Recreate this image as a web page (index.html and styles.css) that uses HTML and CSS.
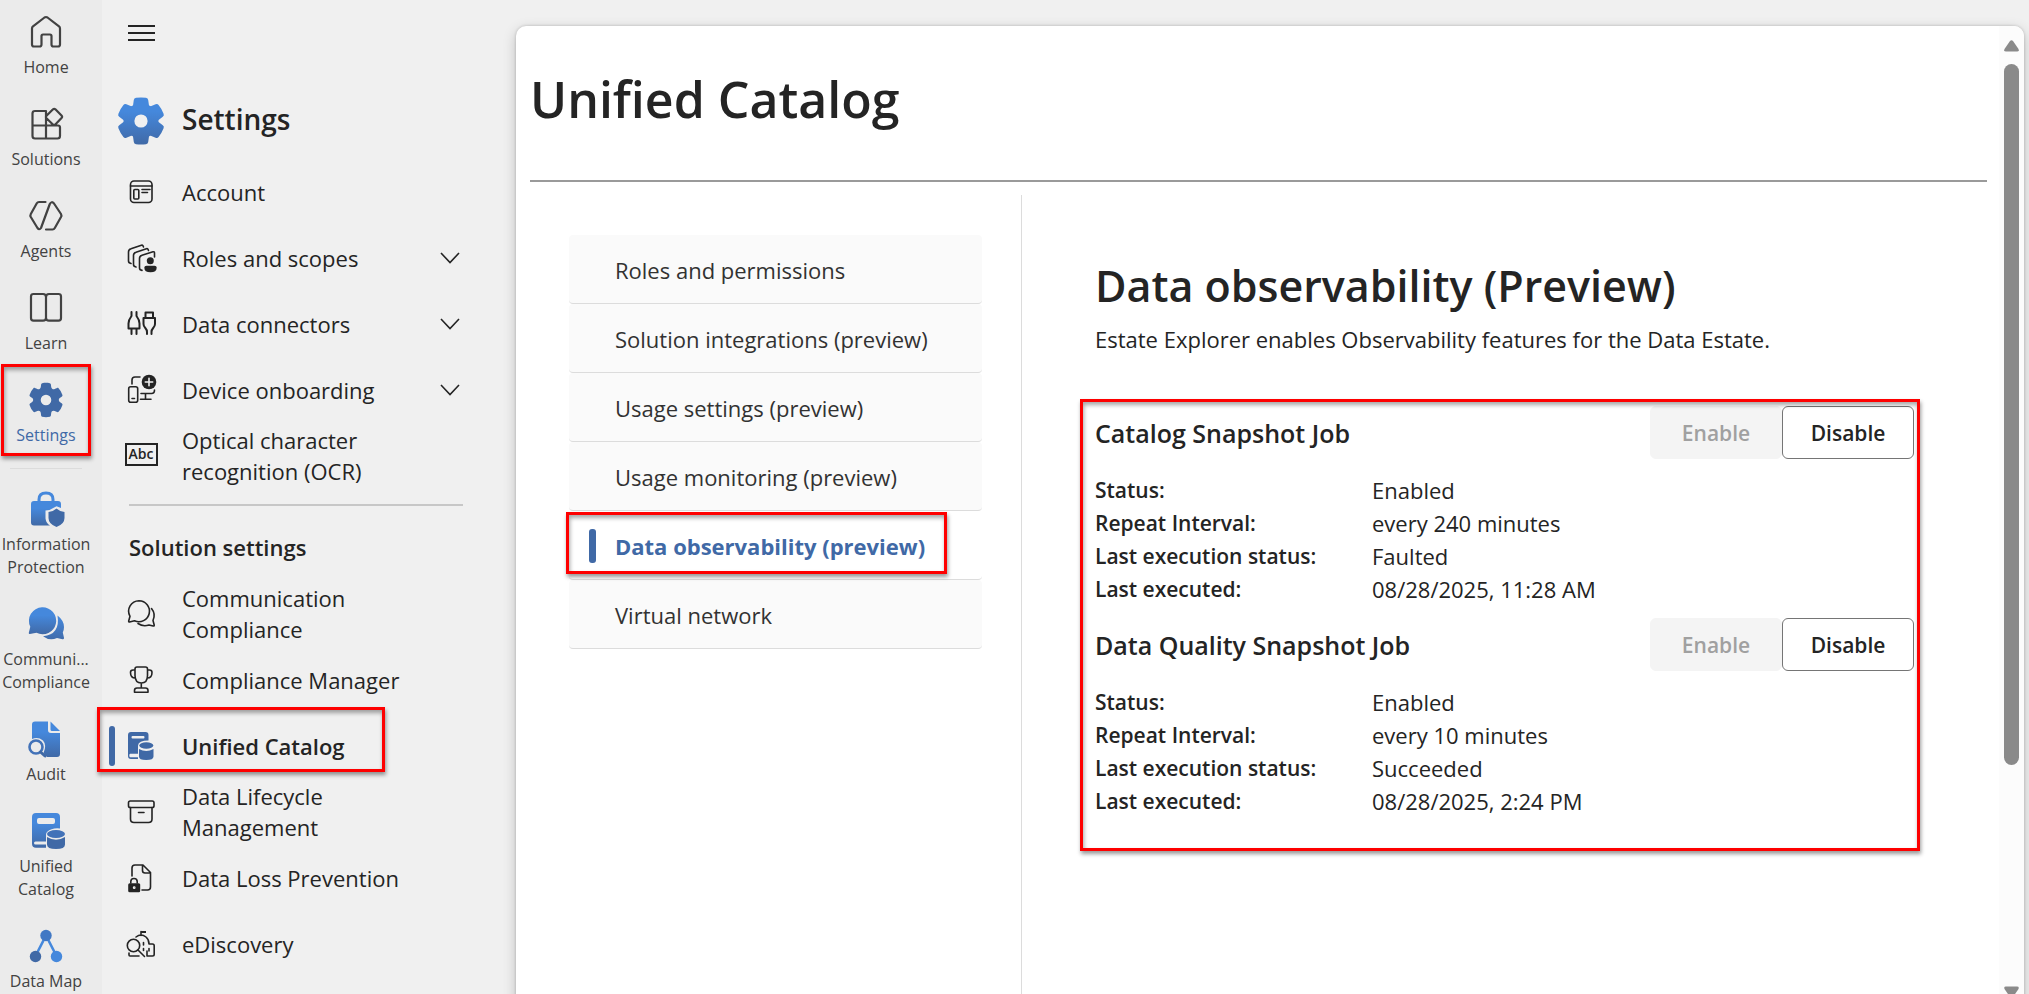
FILE: index.html
```html
<!DOCTYPE html>
<html lang="en">
<head>
<meta charset="utf-8">
<title>Settings - Unified Catalog</title>
<link rel="stylesheet" href="styles.css">
</head>
<body>
<svg class="defs" width="0" height="0" aria-hidden="true">
  <defs>
    <linearGradient id="blue" x1="0" y1="0" x2="0" y2="1">
      <stop offset="0.3" stop-color="#4588dc"/>
      <stop offset="1" stop-color="#4069a6"/>
    </linearGradient>
    <linearGradient id="blue-page" gradientUnits="userSpaceOnUse" x1="0" y1="0" x2="0" y2="36">
      <stop offset="0.3" stop-color="#4588dc"/>
      <stop offset="1" stop-color="#4069a6"/>
    </linearGradient>
    <mask id="gear" maskUnits="userSpaceOnUse" x="0" y="0" width="48" height="48">
      <circle cx="24" cy="24" r="17.500" fill="#fff"/>
      <g fill="#fff">
        <path id="tooth" d="M15.500 12 16.800 3Q17 1 19 .8 24 0 29 .8 31 1 31.200 3L32.500 12Z"/>
        <use href="#tooth" transform="rotate(60 24 24)"/>
        <use href="#tooth" transform="rotate(120 24 24)"/>
        <use href="#tooth" transform="rotate(180 24 24)"/>
        <use href="#tooth" transform="rotate(240 24 24)"/>
        <use href="#tooth" transform="rotate(300 24 24)"/>
      </g>
      <circle cx="24" cy="24" r="6.600" fill="#000"/>
    </mask>
  </defs>
</svg>

<div class="app">
  <nav class="rail" aria-label="Solutions">
    <ul class="rail-list">
      <li><a class="rail-item" href="#">
        <svg class="icon line-lg" viewBox="0 0 36 36"><path d="M6 32.500q-2 0-2-2V14.500q0-1.300 1-2.200L16.500 3.500q1.500-1 3 0L31 12.300q1 .9 1 2.200v16q0 2-2 2h-4.500q-2 0-2-2V22q0-1.500-1.500-1.500h-7q-1.500 0-1.500 1.500v8.500q0 2-2 2Z"/></svg>
        <span>Home</span></a></li>
      <li><a class="rail-item" href="#">
        <svg class="icon line-lg" viewBox="0 0 36 36"><path d="M18 5H7Q4.500 5 4.500 7.500V30q0 2.500 2.500 2.500h22.500q2.500 0 2.500-2.500v-8.500q0-2-2-2H4.500M18 5v27.500M18.500 12.300q-1.200-1.300 0-2.600L25 3.300q1.200-1 2.400 0L33.500 9.500q1.200 1.300 0 2.600L27.300 18.500q-1.200 1-2.400 0Z"/></svg>
        <span>Solutions</span></a></li>
      <li><a class="rail-item" href="#">
        <svg class="icon line-lg" viewBox="0 0 36 36"><path d="M17.500 4H11q-1.500 0-2.200 1.200L2.800 16q-.8 1.500 0 3l6.700 11q1.800 2.500 3.500 0L21.800 6q1.800-3.300 4.200-.5L33 16q.8 1.500 0 3l-6.200 11q-.8 1.500-2.300 1.500h-6.500"/></svg>
        <span>Agents</span></a></li>
      <li><a class="rail-item" href="#">
        <svg class="icon line-lg" viewBox="0 0 36 36"><path d="M18 7q0-3-3-3H5.500Q3 4 3 6.500V28q0 2.700 2.500 2.700H15q3 0 3-3 0 3 3 3h9.500q2.500 0 2.500-2.700V6.500Q33 4 30.500 4H21q-3 0-3 3v20.700"/></svg>
        <span>Learn</span></a></li>
      <li class="marked"><a class="rail-item current" href="#" aria-current="page">
        <svg class="icon" viewBox="1.800 1.800 20.400 20.400"><path fill="#4069a6" fill-rule="evenodd" d="M12.010 2.250c.74 0 1.470.1 2.180.25.32.07.55.33.59.65l.17 1.530a1.380 1.380 0 0 0 1.920 1.110l1.400-.61c.3-.13.64-.06.85.17a9.800 9.800 0 0 1 2.200 3.800c.1.3 0 .63-.26.82l-1.250.92a1.380 1.380 0 0 0 0 2.220l1.250.92c.26.19.36.52.27.82a9.800 9.800 0 0 1-2.200 3.800.75.75 0 0 1-.85.17l-1.400-.62a1.380 1.380 0 0 0-1.930 1.120l-.17 1.520a.75.75 0 0 1-.58.65 9.500 9.500 0 0 1-4.400 0 .75.75 0 0 1-.57-.65l-.17-1.520a1.380 1.380 0 0 0-1.930-1.110l-1.400.62a.75.75 0 0 1-.85-.18 9.800 9.800 0 0 1-2.200-3.800c-.1-.3 0-.63.26-.82l1.250-.92a1.380 1.380 0 0 0 0-2.220l-1.240-.92a.75.75 0 0 1-.28-.82 9.800 9.800 0 0 1 2.200-3.800c.23-.23.57-.3.86-.17l1.400.62c.4.17.86.15 1.250-.08.38-.22.63-.6.68-1.040l.17-1.530a.75.75 0 0 1 .58-.65c.72-.16 1.450-.24 2.200-.25ZM12 9a3 3 0 1 0 0 6 3 3 0 0 0 0-6Z"/></svg>
        <span>Settings</span></a></li>
    </ul>
    <hr class="rail-rule">
    <ul class="rail-list">
      <li><a class="rail-item" href="#">
        <svg class="icon" viewBox="0 0 36 36"><path d="M11 12V8.500q0-6.500 7-6.500t7 6.500V12" fill="none" stroke="#4588dc" stroke-width="3"/><path fill="url(#blue)" d="M6 10h24q3 0 3 3v4l-4.500-1.800-7 3.800-4 .5v8q.5 4.500 4.500 7H6q-3 0-3-3V13q0-3 3-3Z"/><path fill="#4069a6" d="M28.500 17.500q3.500 3.300 8 3.500v6q0 6-8 9-8-3-8-9v-6q4.500-.2 8-3.500Z"/></svg>
        <span>Information Protection</span></a></li>
      <li><a class="rail-item" href="#">
        <svg class="icon" viewBox="0 0 36 36"><path fill="url(#blue)" d="M14 1.300a13.500 13.500 0 1 1-5.500 25.500L1.800 28q-1.300 0-1-1.300l1.500-6A13.500 13.500 0 0 1 14 1.300Z"/><path fill="url(#blue-page)" d="M29.500 9.500q6.500 5 6.500 11.500 0 3-1.200 5.500l1.200 5.300q.2 1.700-1.500 1.500l-5.500-1.200q-7.500 3.200-14-1.800Q32.500 28.500 29.500 9.500Z"/></svg>
        <span>Communi... Compliance</span></a></li>
      <li><a class="rail-item" href="#">
        <svg class="icon" viewBox="0 0 36 36"><path fill="url(#blue)" d="M7 .5h13V9q0 3 3 3h9v21q0 3-3 3H19l-3.500-4Q19 24 15 19.500 10 15.500 4 18V3.500q0-3 3-3ZM22.500.500 32 10h-8q-1.500 0-1.500-1.500Z"/><circle cx="8" cy="26" r="6.500" fill="none" stroke="#4272b8" stroke-width="2.600"/><path d="m12.500 31 4.500 4" stroke="#4069a6" stroke-width="3" stroke-linecap="round"/></svg>
        <span>Audit</span></a></li>
      <li><a class="rail-item" href="#">
        <svg class="icon" viewBox="0 0 36 36"><path fill="url(#blue)" fill-rule="evenodd" d="M8 0h20q4 0 4 4v11.500q-8-1-13 3.500-1 1-1 3v6.500H7.500Q6 28.500 6 30t1.500 1.500H18v3.200H8q-4 0-4-4V4q0-4 4-4Zm3 5q-2 0-2 2v2q0 2 2 2h14q2 0 2-2V7q0-2-2-2Z"/><ellipse cx="28" cy="21" rx="9" ry="4" fill="#4272b8"/><path fill="#4069a6" d="M19 24q9 5.500 18 0v7.500q0 4.500-9 4.500t-9-4.500Z"/></svg>
        <span>Unified Catalog</span></a></li>
      <li><a class="rail-item" href="#">
        <svg class="icon" viewBox="0 0 36 36"><path d="M7.500 28 18 7.500 28.500 28" fill="none" stroke="#4588dc" stroke-width="2.600"/><circle cx="18" cy="7.500" r="5.700" fill="#4178c4"/><circle cx="7.500" cy="28.500" r="5.700" fill="#4069a6"/><circle cx="28.500" cy="28.500" r="5.700" fill="#4588dc"/></svg>
        <span>Data Map</span></a></li>
    </ul>
  </nav>

  <aside class="side">
    <button class="menu-button" type="button" aria-label="Collapse navigation"><i></i><i></i><i></i></button>
    <h2 class="side-title">
      <svg class="gear" viewBox="0 0 48 48"><rect width="48" height="48" fill="url(#blue)" mask="url(#gear)"/></svg>
      <span>Settings</span>
    </h2>
    <ul class="side-list">
      <li><a class="side-item" href="#">
        <svg class="icon line" viewBox="0 0 36 36"><rect x="7.500" y="7" width="21.500" height="21.500" rx="3.500"/><path d="M7.500 12h21.500M19 15.500h8M19 18.500h5.500"/><rect x="10.800" y="15.500" width="5" height="9.500" rx="1"/></svg>
        <span>Account</span></a></li>
      <li><button class="side-item" type="button" aria-expanded="false">
        <svg class="icon line" viewBox="0 0 36 36"><path d="m20.500 7-.6-1.300q-.5-.8-1.500-.5L8 8.800q-2.500.8-2.500 3.200v9q0 2 2.500 2.500M25.500 10.500l-.6-1.300q-.5-.8-1.500-.5L13 12.300q-2.500.8-2.500 3.200v9q0 2 2.500 2.500M31.500 17v-4q0-1.500-1.500-1.300l-11 3.500q-2.500.8-2.500 3.200v9.500q0 2 2.500 2.500"/><circle class="solid" cx="27.300" cy="20.700" r="3.500"/><path class="solid" d="M23.500 25.800h8q2.200 0 2.200 2 0 4.500-6.200 4.500t-6.200-4.500q0-2 2.200-2Z"/></svg>
        <span>Roles and scopes</span>
        <svg class="chevron" viewBox="0 0 20 12"><path d="m1 1 9 9.500L19 1"/></svg></button></li>
      <li><button class="side-item" type="button" aria-expanded="false">
        <svg class="icon line heavy" viewBox="0 0 36 36"><path d="M8.500 6v4q-3 4-3 7.500v5h11v-5q0-3.500-3-7.500V6M8.500 22.500V28M13.500 22.500V28M22.500 12V6.500H30V12M20.500 12h11.500v6q0 2-1.800 4t-1.700 4v2M20.500 12v6q0 2 1.800 4t1.700 4v2"/></svg>
        <span>Data connectors</span>
        <svg class="chevron" viewBox="0 0 20 12"><path d="m1 1 9 9.500L19 1"/></svg></button></li>
      <li><button class="side-item" type="button" aria-expanded="false">
        <svg class="icon line" viewBox="0 0 36 36"><path d="M9 12V8q0-3 3-3h5M31.500 18q0 3.500-3 3.500H18M22.500 21.500V27M17.500 27.300h10.500M9 26.500h2.500"/><rect x="5.700" y="14.700" width="9" height="15.500" rx="2"/><circle class="solid" cx="26" cy="10" r="7.300"/><path d="M22.300 10h7.400M26 6.300v7.400" stroke="#f0f0f0"/></svg>
        <span>Device onboarding</span>
        <svg class="chevron" viewBox="0 0 20 12"><path d="m1 1 9 9.500L19 1"/></svg></button></li>
      <li><a class="side-item" href="#">
        <span class="icon abc-wrap"><b class="abc">Abc</b></span>
        <span>Optical character recognition (OCR)</span></a></li>
    </ul>
    <hr class="side-rule">
    <h3 class="side-heading">Solution settings</h3>
    <ul class="side-list">
      <li><a class="side-item" href="#">
        <svg class="icon line" viewBox="0 0 36 36"><path d="M16 4.700a10.500 10.500 0 1 1-4.500 20L6.500 26q-1 0-.8-1l1.300-4.700A10.500 10.500 0 0 1 16 4.700ZM28.500 12.500q4.500 5.500 1.500 12l1.200 4.500q.2 1.200-1 1l-4.200-1q-6 2-11-1.500"/></svg>
        <span>Communication Compliance</span></a></li>
      <li><a class="side-item" href="#">
        <svg class="icon line" viewBox="0 0 36 36"><path d="M12 7q0-2 2-2h8.500q2 0 2 2v6.500q0 7.500-6.200 7.500T12 13.500ZM12 8h-2q-2.500 0-2.500 2.500 0 5.500 4.800 5.500M24.500 8h2q2.500 0 2.500 2.500 0 5.500-4.800 5.500M18.300 21v5M11.500 30.200v-1.700q0-2.500 2.500-2.500h8.500q2.500 0 2.500 2.500v1.700Z"/></svg>
        <span>Compliance Manager</span></a></li>
      <li class="catalog"><a class="side-item current" href="#" aria-current="page">
        <svg class="icon" viewBox="0 0 36 36"><path fill="#4069a6" fill-rule="evenodd" d="M8 4h14.500q3 0 3 3v5.500q-10 0-10.500 5v8.300H7.200q-.9 0-.9 1.700t.9 1.700H15V31H8q-3 0-3-3V7q0-3 3-3Zm1.500 4q-1 0-1 1.200t1 1.200h11q1 0 1-1.200T20.500 8Z"/><ellipse cx="23.300" cy="17.500" rx="7" ry="3.200" fill="#4069a6"/><path fill="#4069a6" d="M16 21q7.300 4.200 14.500 0v7.500q0 3.500-7.300 3.500T16 28.500Z"/></svg>
        <span>Unified Catalog</span></a></li>
      <li><a class="side-item" href="#">
        <svg class="icon line" viewBox="0 0 36 36"><rect x="5.500" y="7" width="25.500" height="6.500" rx="1.800"/><path d="M7.500 13.500v11.500q0 3.500 3.500 3.500h14.500q3.500 0 3.500-3.500V13.500M15.500 18.500h5.500"/></svg>
        <span>Data Lifecycle Management</span></a></li>
      <li><a class="side-item" href="#">
        <svg class="icon line" viewBox="0 0 36 36"><path d="M9 16V8q0-3 3-3h8l7.500 7.500V27q0 3-3 3H19M19.500 5v5.500q0 2.500 2.500 2.500h5.500M7.800 23v-1.500q0-3 3.200-3t3.200 3V23"/><rect class="solid" x="5.200" y="23.300" width="12" height="9" rx="1.500"/><circle cx="11.200" cy="27.700" r=".6" stroke="#f0f0f0"/></svg>
        <span>Data Loss Prevention</span></a></li>
      <li><a class="side-item" href="#">
        <svg class="icon line" viewBox="0 0 36 36"><circle cx="10.500" cy="19.500" r="6.200"/><path d="m15 24 6.500 6.500M6 27v2q0 1 1 1h9M13 11q5-4 10 0 3 2.500 3 7h3.500q1.700 0 1.700 1.700v8.600q0 1.700-1.700 1.700H24v-5M18 9.500V5.500M20.500 16.500v2.500M20.500 22.500v2M26 22.500v2.500"/><path class="solid" d="M18 5h5v2h-5Z"/></svg>
        <span>eDiscovery</span></a></li>
    </ul>
  </aside>

  <main class="card">
    <div class="content">
      <header class="page-head"><h1>Unified Catalog</h1></header>
      <div class="columns">
        <nav class="tabs" aria-label="Unified Catalog settings">
          <a class="tab" href="#">Roles and permissions</a>
          <a class="tab" href="#">Solution integrations (preview)</a>
          <a class="tab" href="#">Usage settings (preview)</a>
          <a class="tab" href="#">Usage monitoring (preview)</a>
          <a class="tab active" href="#" aria-current="page">Data observability (preview)</a>
          <a class="tab" href="#">Virtual network</a>
        </nav>
        <section class="panel">
          <h2>Data observability (Preview)</h2>
          <p>Estate Explorer enables Observability features for the Data Estate.</p>
          <div class="jobs">
            <article class="job">
              <div class="job-head">
                <h3>Catalog Snapshot Job</h3>
                <button class="btn" type="button" disabled>Enable</button><button class="btn" type="button">Disable</button>
              </div>
              <dl>
                <dt>Status:</dt><dd>Enabled</dd>
                <dt>Repeat Interval:</dt><dd>every 240 minutes</dd>
                <dt>Last execution status:</dt><dd>Faulted</dd>
                <dt>Last executed:</dt><dd>08/28/2025, 11:28 AM</dd>
              </dl>
            </article>
            <article class="job">
              <div class="job-head">
                <h3>Data Quality Snapshot Job</h3>
                <button class="btn" type="button" disabled>Enable</button><button class="btn" type="button">Disable</button>
              </div>
              <dl>
                <dt>Status:</dt><dd>Enabled</dd>
                <dt>Repeat Interval:</dt><dd>every 10 minutes</dd>
                <dt>Last execution status:</dt><dd>Succeeded</dd>
                <dt>Last executed:</dt><dd>08/28/2025, 2:24 PM</dd>
              </dl>
            </article>
          </div>
        </section>
      </div>
    </div>
    <div class="scrollbar" aria-hidden="true">
      <svg class="arrow" viewBox="0 0 15 12"><path d="M6 1q1.500-1.500 3 0l5.500 8q1 2.500-1.500 2.500H2Q-.5 11.500.5 9Z"/></svg>
      <div class="track"><div class="thumb"></div></div>
      <svg class="arrow" viewBox="0 0 15 12"><path d="M6 11q1.500 1.500 3 0l5.500-8q1-2.500-1.500-2.500H2Q-.5.5.5 3Z"/></svg>
    </div>
  </main>
</div>
</body>
</html>
```
FILE: styles.css
```css
*, *::before, *::after { box-sizing: border-box; }

body {
  margin: 0;
  height: 100vh;
  overflow: hidden;
  background: #f0f0f0;
  color: #242424;
  font: 22px/31px "Open Sans", "Noto Sans", sans-serif;
}

h1, h2, h3, p, dl, dd, ul { margin: 0; padding: 0; }
h1, h2, h3, dt { font-weight: 600; }
ul { list-style: none; }
a { color: inherit; text-decoration: none; }
button { font: inherit; color: inherit; background: none; border: 0; padding: 0; text-align: left; }
hr { border: 0; margin: 0; }

.defs { position: absolute; }
.app { display: flex; height: 100%; }

.icon { flex: none; width: 36px; height: 36px; overflow: visible; }
.line, .line-lg { fill: none; stroke: #242424; stroke-width: 1.6; stroke-linecap: round; stroke-linejoin: round; }
.line-lg { stroke: #424242; stroke-width: 2.2; }
.heavy { stroke-width: 2; }
.line .solid { fill: #242424; stroke: none; }

/* Left rail */
.rail { flex: none; width: 102px; padding-top: 14px; background: #ebebeb; }
.rail-list { width: 92px; }
.rail-item {
  display: flex;
  flex-direction: column;
  align-items: center;
  gap: 6px;
  padding-bottom: 27px;
  color: #424242;
  font-size: 16px;
  line-height: 23px;
  text-align: center;
}
.rail-item.current { color: #4069a6; }
.rail-rule { width: 72px; height: 1px; margin: -6px 0 22px 10px; background: #dcdcdc; }

/* Red call-outs drawn over the page */
.marked, .catalog, .active, .jobs { position: relative; }
.marked::after, .catalog::after, .active::after, .jobs::after {
  content: "";
  position: absolute;
  border: 3px solid #fe0000;
  box-shadow: 1px 3px 4px rgba(0, 0, 0, .4), inset 1px 3px 4px rgba(0, 0, 0, .35);
  pointer-events: none;
}
.marked::after { left: 1px; top: -18px; width: 90px; height: 92px; }
.catalog::after { left: -5px; top: -6px; width: 288px; height: 65px; }
.active::after { left: -3px; top: 1px; width: 381px; height: 62px; }
.jobs::after { left: -15px; right: -6px; top: -7px; bottom: -33px; }

/* Settings navigation */
.side { flex: none; width: 414px; padding-top: 24px; }
.menu-button { display: flex; flex-direction: column; gap: 5px; width: 27px; margin: 1px 0 0 26px; }
.menu-button i { height: 2px; background: #242424; }
.side-title {
  display: flex;
  align-items: center;
  gap: 17px;
  height: 50px;
  margin: 55px 0 13px 15px;
  font-size: 28px;
}
.side-title span { padding-bottom: 3px; }
.gear { width: 48px; height: 48px; }
.side-item {
  display: flex;
  align-items: center;
  gap: 23px;
  width: 360px;
  height: 66px;
  padding-left: 21px;
}
.side-item span:not(.icon) { flex: none; width: 230px; }
.side-item.current { position: relative; font-weight: 600; }
.side-item.current::before {
  content: "";
  position: absolute;
  left: 7px;
  top: 13px;
  width: 6px;
  height: 40px;
  border-radius: 3px;
  background: #4069a6;
}
.chevron { width: 20px; height: 12px; fill: none; stroke: #242424; stroke-width: 1.6; }
.side-item .chevron { margin-left: 5px; }
.abc-wrap { display: flex; align-items: center; justify-content: center; padding-bottom: 4px; }
.abc { flex: none; width: 33px; height: 23px; border: 2px solid #242424; font-size: 14px; font-weight: 600; line-height: 18px; text-align: center; }
.side-rule { width: 334px; height: 2px; margin: 15px 0 0 27px; background: #c7c7c7; }
.side-heading { margin: 26px 0 18px 27px; font-size: 22px; }

/* Content card */
.card {
  display: flex;
  flex: 1;
  min-width: 0;
  margin: 26px 5px -16px 0;
  overflow: hidden;
  border-radius: 10px;
  background: #fff;
  box-shadow: 0 0 3px rgba(0, 0, 0, .2), 0 4px 14px rgba(0, 0, 0, .2);
}
.content { display: flex; flex: 1; flex-direction: column; min-width: 0; padding: 0 12px 0 14px; }
.page-head { height: 156px; padding-top: 37px; border-bottom: 2px solid #9a9a9a; }
h1 { font-size: 50px; line-height: 72px; }
.columns { display: flex; flex: 1; margin-top: 13px; }
.tabs { flex: none; width: 492px; padding: 40px 39px 0; border-right: 1px solid #dcdcdc; }
.tab {
  display: block;
  height: 69px;
  padding: 20px 0 0 46px;
  border-bottom: 1px solid #dcdcdc;
  border-radius: 4px;
  background: #fafafa;
  color: #323232;
}
.tab.active { background: none; color: #4069a6; font-weight: 700; }
.active::before {
  content: "";
  position: absolute;
  left: 20px;
  top: 18px;
  width: 7px;
  height: 34px;
  border-radius: 3px;
  background: #4069a6;
}
.panel { flex: 1; min-width: 0; padding: 60px 73px 0; }
.panel h2 { font-size: 43px; line-height: 62px; }
.panel p { margin-top: 7px; }
.jobs { margin-top: 51px; }
.job + .job { margin-top: 12px; }
.job-head { display: flex; height: 53px; }
.job h3 { flex: 1; font-size: 25px; line-height: 54px; }
.btn {
  width: 132px;
  padding-top: 2px;
  border: 1px solid #757575;
  border-radius: 6px;
  background: #fff;
  font-size: 21px;
  font-weight: 600;
  text-align: center;
}
.btn:disabled { border-color: #f4f4f4; background: #f4f4f4; color: #a0a0a0; }
dl { display: grid; grid-template-columns: 277px 1fr; margin-top: 15px; line-height: 33px; }
dt { font-size: 21px; }

/* Scrollbar */
.scrollbar {
  display: flex;
  flex: none;
  flex-direction: column;
  align-items: center;
  gap: 12px;
  width: 25px;
  padding: 14px 0 12px;
  background: #fcfcfc;
}
.arrow { flex: none; width: 15px; height: 12px; fill: #8a8a8a; }
.track { flex: 1; }
.thumb { width: 15px; height: 77%; border-radius: 8px; background: #8a8a8a; }
```
